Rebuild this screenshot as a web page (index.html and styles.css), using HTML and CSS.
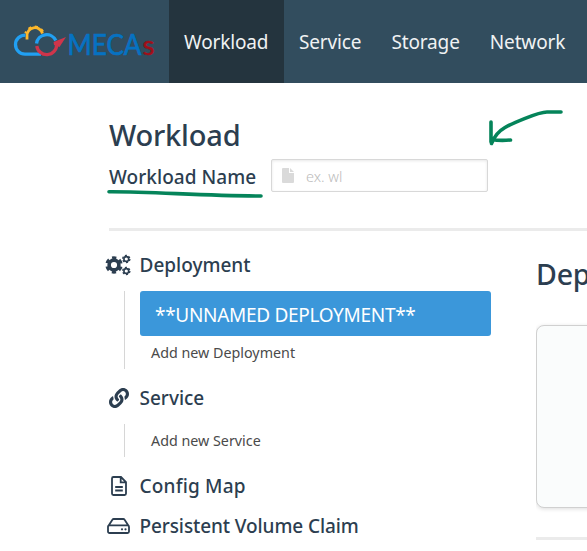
FILE: index.html
```html
<!DOCTYPE html>
<html lang="en">
<head>
<meta charset="utf-8">
<title>Workload</title>
<link rel="stylesheet" href="styles.css">
</head>
<body>
<header class="topbar">
  <a class="brand">
    <svg width="169" height="83" viewBox="0 0 169 83">
      <g fill="none">
        <path d="M27 39.500v-3.500a7.900 7.900 0 0 1 15.500-2.500" stroke="#fcb72b" stroke-width="2.800"/>
        <path d="M25.600 33.500a9.400 9.400 0 0 1 17.800-.5" stroke="#fcb72b" stroke-width="2.600" stroke-dasharray="3 3.500" stroke-dashoffset="1"/>
        <path d="M41 54.200H25a9.600 9.600 0 0 1-9.500-9.600c0-5.400 4.500-9.500 10-9.500" stroke="#21a0f3" stroke-width="3.300"/>
        <path d="M36.500 43.500a10.200 10.200 0 0 1 19.300-3" stroke="#21a0f3" stroke-width="3.300"/>
        <path d="M36.800 46a10 10 0 0 0 19.900-1.500" stroke="#cf354b" stroke-width="3.300"/>
      </g>
      <path d="M66 37l-12.500 5 .5 3 5.500 2z" fill="#cf354b"/>
      <text class="brand-main" x="67.500" y="55" textLength="74" lengthAdjust="spacingAndGlyphs">MECA</text>
      <text class="brand-end" x="142.500" y="55" textLength="12" lengthAdjust="spacingAndGlyphs">s</text>
    </svg>
  </a>
  <nav class="nav">
    <a class="nav-item active">Workload</a>
    <a class="nav-item">Service</a>
    <a class="nav-item">Storage</a>
    <a class="nav-item">Network</a>
  </nav>
</header>
<main class="page">
  <h1 class="title">Workload</h1>
  <div class="field">
    <label class="field-label">Workload Name</label>
    <div class="input">
      <svg width="12" height="15" viewBox="0 0 12 15"><path d="M1 0h6v5h5v9a1 1 0 0 1-1 1H1a1 1 0 0 1-1-1V1a1 1 0 0 1 1-1zM8 0l4 4H8z" fill="#dadada"/></svg>
      <span class="placeholder">ex. wl</span>
    </div>
  </div>
  <div class="rule"></div>
  <div class="columns">
    <aside class="tree">
      <h2 class="group">
        <svg class="icon gears" width="26" height="22" viewBox="0 0 26 22" fill="none" stroke="#2c3e50">
          <circle cx="9" cy="11" r="4.900" stroke-width="3.600"/>
          <circle cx="9" cy="11" r="7.300" stroke-width="2.800" stroke-dasharray="4.200 3.440" stroke-dashoffset="-1.700"/>
          <circle cx="21.300" cy="5" r="2.400" stroke-width="1.600"/>
          <circle cx="21.300" cy="5" r="3.600" stroke-width="1.300" stroke-dasharray="2.100 1.670"/>
          <circle cx="21.300" cy="17" r="2.400" stroke-width="1.600"/>
          <circle cx="21.300" cy="17" r="3.600" stroke-width="1.300" stroke-dasharray="2.100 1.670"/>
        </svg>
        <span>Deployment</span>
      </h2>
      <div class="branch deployment">
        <div class="selected"><span>**UNNAMED DEPLOYMENT**</span></div>
        <div class="add">Add new Deployment</div>
      </div>
      <h2 class="group service">
        <svg class="icon" width="20" height="20" viewBox="0 0 512 512"><path fill="#2c3e50" d="M326.612 185.391c59.747 59.809 58.927 155.698.36 214.59-.11.12-.24.25-.36.37l-67.2 67.2c-59.27 59.27-155.699 59.262-214.96 0-59.27-59.26-59.27-155.7 0-214.96l37.106-37.106c9.84-9.84 26.786-3.3 27.294 10.606.648 17.722 3.826 35.527 9.69 52.721 1.986 5.822.567 12.262-3.783 16.612l-13.087 13.087c-28.026 28.026-28.905 73.66-1.155 101.96 28.024 28.579 74.086 28.749 102.325.51l67.2-67.19c28.191-28.191 28.073-73.757 0-101.83-3.701-3.694-7.429-6.564-10.341-8.569a16.037 16.037 0 0 1-6.947-12.606c-.396-10.567 3.348-21.456 11.698-29.806l21.054-21.055c5.521-5.521 14.182-6.199 20.584-1.731a152.482 152.482 0 0 1 20.522 17.197zM467.547 44.449c-59.261-59.262-155.69-59.27-214.96 0l-67.2 67.2c-.12.12-.25.25-.36.37-58.566 58.892-59.387 154.781.36 214.59a152.454 152.454 0 0 0 20.521 17.196c6.402 4.468 15.064 3.789 20.584-1.731l21.054-21.055c8.35-8.35 12.094-19.239 11.698-29.806a16.037 16.037 0 0 0-6.947-12.606c-2.912-2.005-6.64-4.875-10.341-8.569-28.073-28.073-28.191-73.639 0-101.83l67.2-67.19c28.239-28.239 74.3-28.069 102.325.51 27.75 28.3 26.872 73.934-1.155 101.96l-13.087 13.087c-4.35 4.35-5.769 10.79-3.783 16.612 5.864 17.194 9.042 34.999 9.69 52.721.509 13.906 17.454 20.446 27.294 10.606l37.106-37.106c59.271-59.259 59.271-155.699.001-214.959z"/></svg>
        <span>Service</span>
      </h2>
      <div class="branch">
        <div class="add">Add new Service</div>
      </div>
      <h2 class="group config">
        <svg class="icon" width="16" height="20" viewBox="0 0 16 20" fill="none" stroke="#2c3e50" stroke-width="1.8"><path d="M2.4 1H10l5 5v11.6a1.4 1.4 0 0 1-1.4 1.4H2.4A1.4 1.4 0 0 1 1 17.600V2.400A1.400 1.400 0 0 1 2.400 1zM9.700 1v5.300H15M4.200 11h7.600M4.200 14.500h7.600"/></svg>
        <span>Config Map</span>
      </h2>
      <h2 class="group volume">
        <svg class="icon" width="23" height="16" viewBox="0 0 23 16" fill="none" stroke="#2c3e50" stroke-width="1.8"><path d="M1 8.500L5.400 1.700Q5.900 1 6.700 1h9.600q.8 0 1.300.7L22 8.500M2.500 7.300h18A1.500 1.500 0 0 1 22 8.800v4.700a1.500 1.500 0 0 1-1.500 1.500h-18A1.500 1.500 0 0 1 1 13.500V8.800A1.500 1.500 0 0 1 2.500 7.300z"/><g fill="#2c3e50" stroke="none"><circle cx="15" cy="11.300" r="1.100"/><circle cx="18.500" cy="11.300" r="1.100"/></g></svg>
        <span>Persistent Volume Claim</span>
      </h2>
    </aside>
    <section class="detail">
      <h1 class="title">Deployment</h1>
      <div class="card"></div>
      <div class="rule"></div>
    </section>
  </div>
</main>
<svg class="marks" width="587" height="551" viewBox="0 0 587 551" fill="none" stroke="#05845a" stroke-width="3.600" stroke-linecap="round" stroke-linejoin="round">
  <path d="M109 191.800C150 191.500 205 196 261 196"/>
  <path d="M561 112H547C538 112 510 124.500 505 127.500C498 131.500 494 137 491.500 143.500M491 122V142M491.500 139.500Q500 141 510.500 140"/>
</svg>
</body>
</html>
```
FILE: styles.css
```css
* { box-sizing: border-box; }
body {
  margin: 0;
  width: 587px;
  height: 551px;
  overflow: hidden;
  background: #fff;
  color: #2c3e50;
  font-family: "Noto Sans", "Open Sans", sans-serif;
}
.topbar {
  display: flex;
  height: 83px;
  background: #324d5e;
}
.brand { width: 169px; flex: none; }
.brand svg { display: block; }
.brand-main { font: 400 29px Lato, sans-serif; fill: #0672c2; stroke: #0672c2; stroke-width: .7px; }
.brand-end { font: 400 26px Lato, sans-serif; fill: #a10f19; stroke: #a10f19; stroke-width: .5px; }
.nav { display: flex; }
.nav-item {
  display: flex;
  align-items: center;
  padding: 0 15px;
  color: #f0f2f3;
  font-size: 19px;
  letter-spacing: -.14px;
  white-space: nowrap;
}
.active { width: 115px; background: #24343e; }
.page { padding: 31px 0 0 109px; }
h1, h2 { margin: 0; }
.title {
  font-size: 29px;
  font-weight: 500;
  line-height: 42px;
  letter-spacing: -.2px;
  white-space: nowrap;
}
.field {
  display: flex;
  align-items: center;
  height: 33px;
  margin-top: 3px;
}
.field-label { width: 162px; padding-top: 2px; font-size: 19px; font-weight: 500; letter-spacing: .05px; white-space: nowrap; }
.input {
  display: flex;
  align-items: center;
  gap: 12px;
  width: 217px;
  height: 33px;
  padding-left: 10px;
  border: 1px solid #d8d8d8;
  border-radius: 2px;
  box-shadow: inset 0 1px 3px #e8e8e8;
}
.placeholder { color: #bcbcbc; font-size: 14.5px; font-weight: 300; }
.rule { height: 3px; background: #ebebeb; }
.page > .rule { margin-top: 36px; }
.columns { display: flex; gap: 45px; }
.tree { width: 382px; flex: none; padding-top: 20px; }
.group {
  display: grid;
  grid-template-columns: 19px 1fr;
  column-gap: 11.5px;
  align-items: center;
  justify-items: start;
  height: 28px;
  font-size: 19px;
  font-weight: 500;
  white-space: nowrap;
}
.icon { justify-self: center; }
.gears { margin-right: 2px; }
.branch { margin-left: 15px; padding-left: 15px; border-left: 1px solid #d6d6d6; }
.deployment { height: 78px; margin-top: 12px; }
.selected {
  display: flex;
  align-items: center;
  height: 45px;
  padding: 2px 0 0 15px;
  border-radius: 3px;
  background: #3b97da;
  color: #fff;
  font-size: 19px;
  letter-spacing: -.3px;
  white-space: nowrap;
}
.add { height: 33px; padding-left: 11px; line-height: 33px; font-size: 14.3px; color: #4a4a4a; }
.service { margin-top: 15px; }
.service + .branch { margin-top: 12px; }
.config { margin-top: 15px; letter-spacing: .2px; }
.volume { margin-top: 12px; letter-spacing: -.1px; }
.detail { flex: 1; min-width: 0; overflow: hidden; padding-top: 22px; }
.detail .title { font-size: 28.5px; }
.card {
  width: 400px;
  height: 183px;
  margin-top: 30px;
  border: 1px solid #d0d0d0;
  border-radius: 8px;
  background: #fafcfc;
  box-shadow: 0 1px 4px #ddd;
}
.detail .rule { margin-top: 29px; }
.marks { position: absolute; left: 0; top: 0; pointer-events: none; }
```
